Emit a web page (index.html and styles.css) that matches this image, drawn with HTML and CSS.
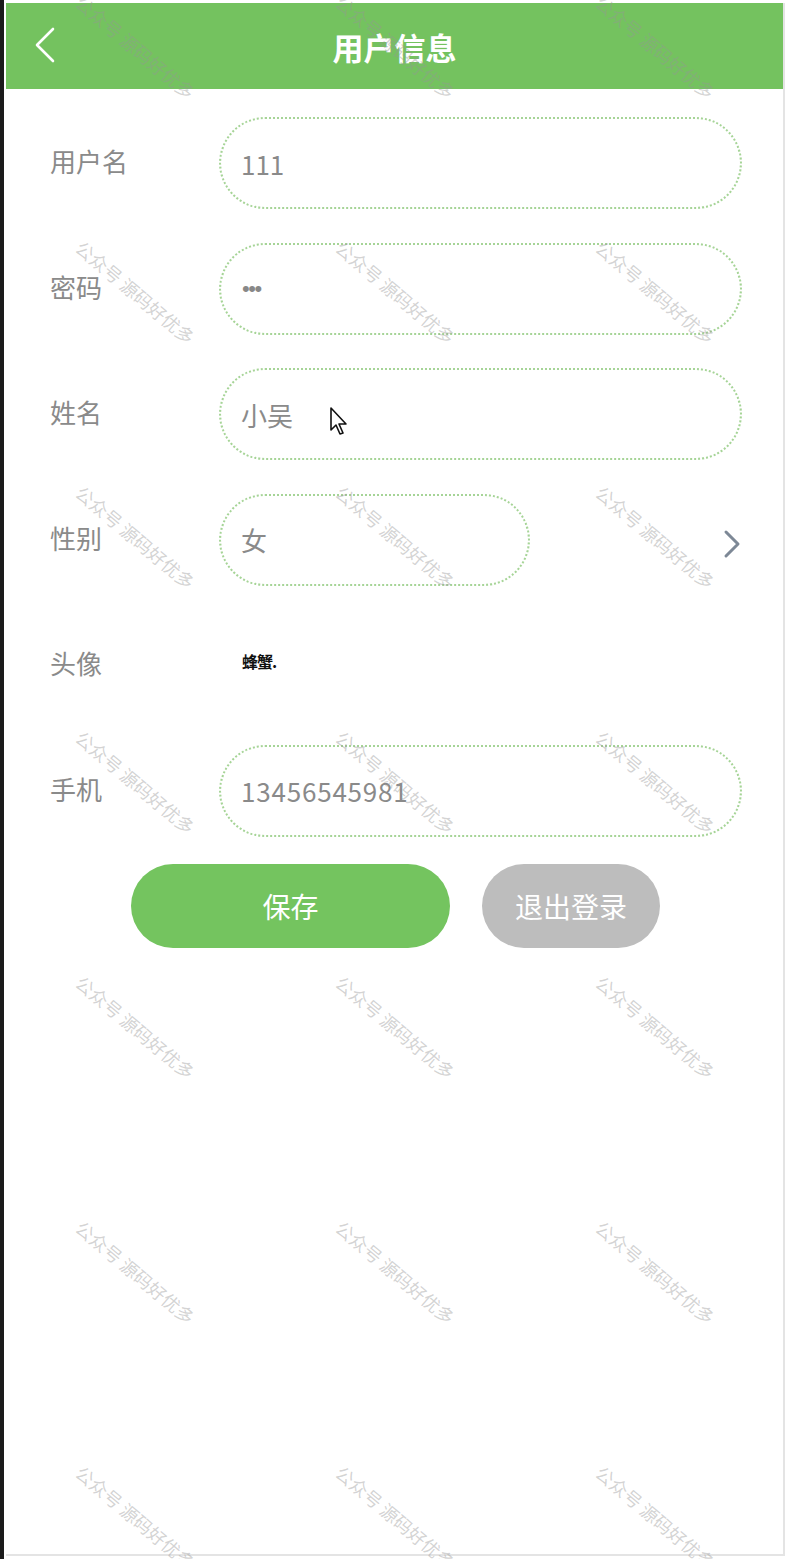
FILE: index.html
```html
<!DOCTYPE html>
<html lang="zh">
<head>
<meta charset="utf-8">
<title>用户信息</title>
<link rel="stylesheet" href="styles.css">
</head>
<body>
<div class="frame">
  <div class="screen">
    <header class="topbar">
      <span class="back">
        <svg width="22" height="36" viewBox="0 0 22 36"><path d="M19 2 L3 18 L19 34" fill="none" stroke="#fff" stroke-width="2.6" stroke-linecap="round" stroke-linejoin="round"/></svg>
      </span>
      <h1 class="title">用户信息</h1>
    </header>

    <form class="form">
      <div class="row">
        <label class="label">用户名</label>
        <div class="field">111</div>
      </div>
      <div class="row">
        <label class="label">密码</label>
        <div class="field pwd">•••</div>
      </div>
      <div class="row">
        <label class="label">姓名</label>
        <div class="field">小吴
          <svg class="cursor" width="22" height="32" viewBox="0 0 22 32"><path d="M2 2 L2 24 L7 19 L11 28 L14 27 L10 18 L17 18 Z" fill="#fff" stroke="#111" stroke-width="1.6" stroke-linejoin="round"/></svg>
        </div>
      </div>
      <div class="row">
        <label class="label">性别</label>
        <div class="field short">女</div>
        <span class="chev">
          <svg width="20" height="30" viewBox="0 0 20 30"><path d="M4 3 L16 15 L4 27" fill="none" stroke="#7d8896" stroke-width="3" stroke-linecap="round" stroke-linejoin="round"/></svg>
        </span>
      </div>
      <div class="row">
        <label class="label">头像</label>
        <div class="avatar">蜂蟹.</div>
      </div>
      <div class="row">
        <label class="label">手机</label>
        <div class="field phone">13456545981</div>
      </div>
      <div class="actions">
        <button type="button" class="btn save">保存</button>
        <button type="button" class="btn logout">退出登录</button>
      </div>
    </form>
  </div>

  <div class="watermarks" aria-hidden="true">
    <span>公众号 源码好优多</span><span>公众号 源码好优多</span><span>公众号 源码好优多</span>
    <span>公众号 源码好优多</span><span>公众号 源码好优多</span><span>公众号 源码好优多</span>
    <span>公众号 源码好优多</span><span>公众号 源码好优多</span><span>公众号 源码好优多</span>
    <span>公众号 源码好优多</span><span>公众号 源码好优多</span><span>公众号 源码好优多</span>
    <span>公众号 源码好优多</span><span>公众号 源码好优多</span><span>公众号 源码好优多</span>
    <span>公众号 源码好优多</span><span>公众号 源码好优多</span><span>公众号 源码好优多</span>
    <span>公众号 源码好优多</span><span>公众号 源码好优多</span><span>公众号 源码好优多</span>
  </div>
</div>
</body>
</html>
```

FILE: styles.css
```css
* { box-sizing: border-box; }
html, body { margin: 0; padding: 0; background: #fff; }
body {
  font-family: "Noto Sans CJK SC", "Noto Sans", "Liberation Sans", sans-serif;
  width: 789px;
  height: 1559px;
  overflow: hidden;
}
.frame {
  position: relative;
  width: 789px;
  height: 1559px;
  border-left: 4px solid #1b1b1b;
  padding: 3px 3px 0 2px;
  overflow: hidden;
}
.screen {
  width: 779px;
  height: 1553px;
  border-right: 2px solid #e4e4e4;
  border-bottom: 2px solid #e4e4e4;
  background: #fff;
}
.topbar {
  height: 86px;
  background: #74c25f;
  display: flex;
  align-items: center;
  justify-content: center;
  position: relative;
}
.back {
  position: absolute;
  left: 28px;
  top: 24px;
  display: flex;
}
.title {
  margin: 0;
  color: #fff;
  font-size: 31px;
  font-weight: 700;
  letter-spacing: 0;
}
.form {
  padding: 28px 0 0 44px;
  display: flex;
  flex-direction: column;
  gap: 33.5px;
}
.row {
  display: flex;
  align-items: center;
  height: 92px;
  position: relative;
}
.label {
  width: 169px;
  flex: none;
  font-size: 26px;
  color: #8a8a8a;
  line-height: 1;
  margin-top: -4px;
}
.field {
  width: 523px;
  height: 92px;
  border: 2px dotted #a6d497;
  border-radius: 46px;
  display: flex;
  align-items: center;
  padding-left: 20px;
  font-size: 26px;
  color: #8a8a8a;
  position: relative;
}
.field.short { width: 311px; }
.field.pwd {
  font-family: "Liberation Sans", sans-serif;
  font-size: 22px;
  letter-spacing: -1.5px;
  color: #888;
  padding-left: 21px;
}
.field.phone { letter-spacing: 0.8px; }
.cursor {
  position: absolute;
  left: 108px;
  top: 36px;
}
.chev {
  margin-left: auto;
  margin-right: 41px;
  display: flex;
  padding-top: 8px;
}
.avatar {
  font-size: 16px;
  font-weight: 700;
  color: #111;
  padding-left: 23px;
  margin-top: -8px;
  letter-spacing: -1px;
}
.actions {
  display: flex;
  gap: 32px;
  padding-left: 81px;
  margin-top: -6px;
}
.btn {
  height: 84px;
  border: none;
  border-radius: 42px;
  color: #fff;
  font-family: inherit;
  font-size: 28px;
  padding: 0;
}
.btn.save { width: 319px; background: #74c45f; }
.btn.logout { width: 178px; background: #bdbdbd; }

.watermarks {
  position: absolute;
  left: 0;
  top: -76px;
  width: 789px;
  display: grid;
  grid-template-columns: repeat(3, 260px);
  grid-auto-rows: 245px;
  padding-left: 2px;
  pointer-events: none;
}
.watermarks span {
  display: flex;
  align-items: center;
  justify-content: center;
  transform: rotate(40deg);
  font-size: 18px;
  color: rgba(150, 150, 150, 0.42);
  white-space: nowrap;
}
```
